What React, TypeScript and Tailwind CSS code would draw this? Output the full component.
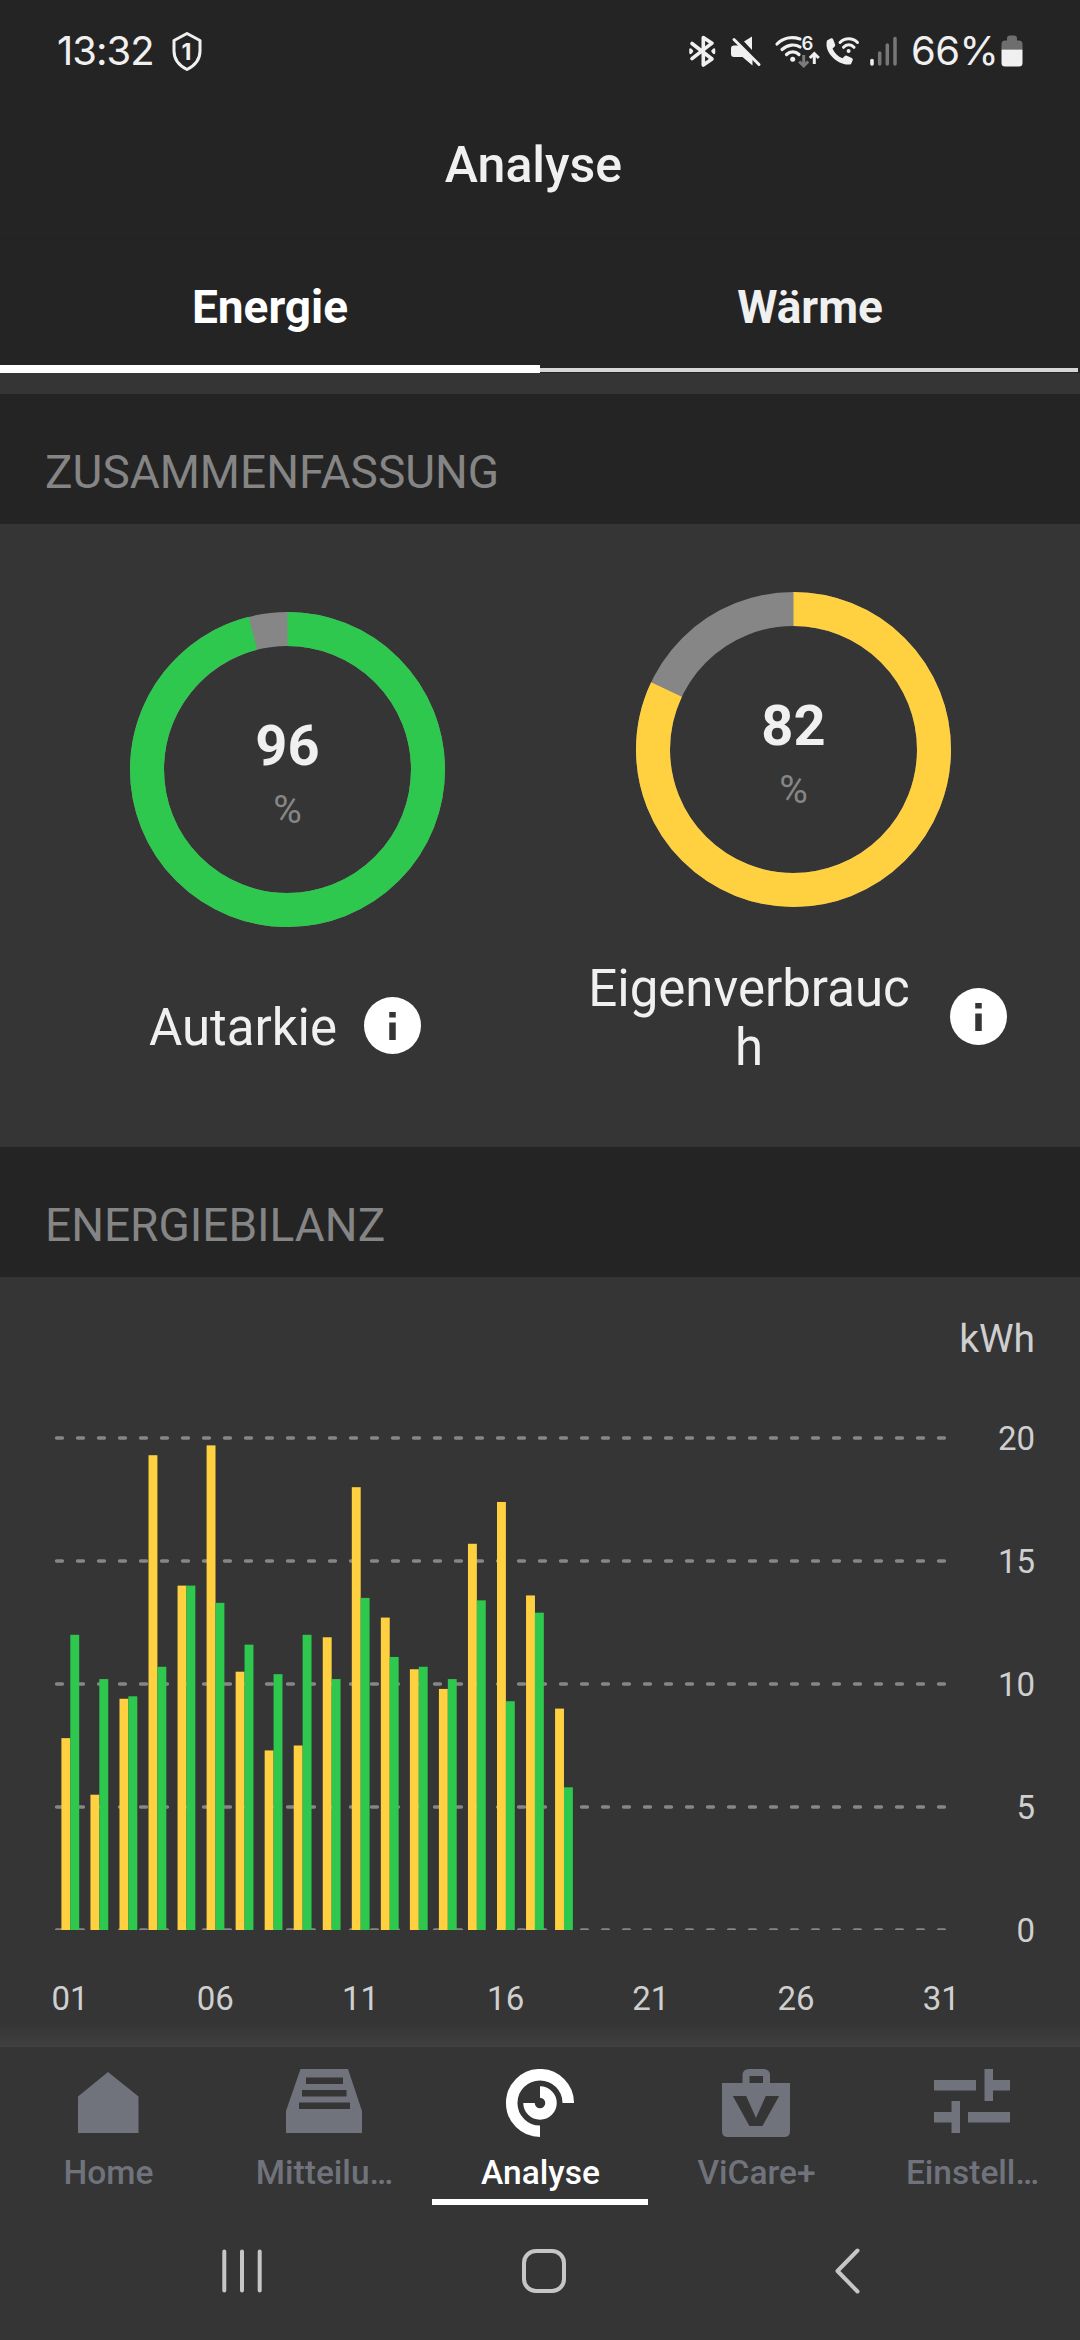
import type { ReactNode } from "react";

const GREEN = "#2ec84e";
const YELLOW = "#ffd140";

// [Erzeugung, Verbrauch] pro Tag in kWh
const DAYS: [number, number][] = [
  [7.8, 12.0],
  [5.5, 10.2],
  [9.4, 9.5],
  [19.3, 10.7],
  [14.0, 14.0],
  [19.7, 13.3],
  [10.5, 11.6],
  [7.3, 10.4],
  [7.5, 12.0],
  [11.9, 10.2],
  [18.0, 13.5],
  [12.7, 11.1],
  [10.6, 10.7],
  [9.8, 10.2],
  [15.7, 13.4],
  [17.4, 9.3],
  [13.6, 12.9],
  [9.0, 5.8],
];

const X_LABELS = ["01", "06", "11", "16", "21", "26", "31"];
const Y_LABELS = [20, 15, 10, 5, 0];

function StatusBar() {
  return (
    <div className="flex h-[102px] items-center justify-between pr-[57px] pl-[57px] font-[Inter,sans-serif] text-[#f0f0f0]">
      <div className="flex items-center">
        <span className="w-[97px] text-[40px] leading-[48px] tracking-[-1px] whitespace-nowrap">13:32</span>
        <svg width="32" height="40" viewBox="0 0 32 40" className="ml-[17px]" fill="none">
          <path d="M16 2.500 L29 9.500 V20 C29 29 24 34.500 16 38.500 C8 34.500 3 29 3 20 V9.500 Z" stroke="#f0f0f0" strokeWidth="3" strokeLinejoin="round" />
          <text x="15.500" y="28.500" textAnchor="middle" fontSize="23" fontWeight="700" fill="#f0f0f0">1</text>
        </svg>
      </div>
      <div className="flex items-center">
        <svg width="220" height="50" viewBox="680 26 220 50" fill="none">
          {/* Bluetooth */}
          <g stroke="#f0f0f0" strokeWidth="3.600" strokeLinecap="round" strokeLinejoin="round">
            <path d="M692 43.500 L712 59 L703.300 65 V37.500 L712 43.200 L692 58.700" />
            <path d="M690.500 49.500l1.500 1.700l-1.500 1.700zM714 49.500l-1.500 1.700l1.500 1.700z" strokeWidth="2.500" />
          </g>
          {/* Ton aus */}
          <path d="M734 45.500 h5 L752.500 59 V65.500 L742.500 57 H734 a3 3 0 0 1-3-3 V48.500 a3 3 0 0 1 3-3Z M752 36.500 V50 L744 41.500 Z" fill="#f0f0f0" />
          <path d="M734 39.500 L759 64.500" stroke="#f0f0f0" strokeWidth="3" strokeLinecap="round" />
          {/* WLAN */}
          <g stroke="#f0f0f0" strokeWidth="3.200" strokeLinecap="round">
            <path d="M777 44 C783.500 37.300 792.500 36.500 800 39" />
            <path d="M782 49.500 C788 44 795.500 44 800 47" />
            <path d="M786.500 54.500 C790 51 795.500 51 799 54.500" />
          </g>
          <circle cx="792.700" cy="59.200" r="2.500" fill="#f0f0f0" />
          <text x="807.300" y="49.700" textAnchor="middle" fontSize="18.500" fontWeight="600" fill="#f0f0f0">6</text>
          <path d="M803.700 55v10M799.200 61.500l4.500 4.500 4.500-4.500" stroke="#7b7b7b" strokeWidth="3" />
          <path d="M814.300 64v-10M809.800 58l4.500-4.500 4.500 4.500" stroke="#f0f0f0" strokeWidth="3" />
          {/* WLAN-Anruf */}
          <path d="M827 40.500 l4-2.200 q1.500-.5 2.100 1 l2 5.200 q.4 1.300-.6 2.200 l-2 1.800 c2 4.800 5.500 8 10 9.700 l2-2 q1-.9 2.300-.4 l5 2.200 q1.500.8.9 2.300 l-1.800 4 C839 66.500 823.500 53 827 40.500Z" fill="#f0f0f0" />
          <path d="M840 42.500 C845 37.500 852.500 37.500 857.500 42.500 M843.500 47.300 C846.500 43.800 851 43.800 854 47.300" stroke="#f0f0f0" strokeWidth="3" strokeLinecap="round" />
          <circle cx="848.600" cy="51" r="2" fill="#f0f0f0" />
          {/* Empfang */}
          <path d="M872 60.500v3.500" stroke="#f0f0f0" strokeWidth="3.600" strokeLinecap="round" />
          <path d="M879.700 53v11M887.300 45v19M895 38.500v25.500" stroke="#777" strokeWidth="3.500" strokeLinecap="round" />
        </svg>
        <span className="ml-[11px] w-[90px] text-[40px] leading-[48px] tracking-[-0.500px] whitespace-nowrap">66%</span>
        <svg width="22" height="32" viewBox="0 0 22 32">
          <path d="M0.500 14 V9 Q0.500 5.500 4 5.500 H6 V3.500 Q6 0.500 9 0.500 H13 Q16 0.500 16 3.500 V5.500 H18 Q21.500 5.500 21.500 9 V14.500 H0.500Z" fill="#6e6e6e" />
          <path d="M0.500 14.500 H21.500 V28 Q21.500 31.500 18 31.500 H4 Q0.500 31.500 0.500 28Z" fill="#f0f0f0" />
        </svg>
      </div>
    </div>
  );
}

function SectionTitle({ children }: { children: ReactNode }) {
  return (
    <h2 className="flex h-[130px] items-center bg-[#242424] pt-[26px] pl-[45px] text-[46px] font-normal text-[#858585]">
      {children}
    </h2>
  );
}

function Ring({ value, color }: { value: number; color: string }) {
  const length = 2 * Math.PI * 140.5;
  return (
    <div className="grid size-[315px] place-items-center">
      <svg width="315" height="315" viewBox="0 0 315 315" className="col-start-1 row-start-1 -rotate-90" fill="none" strokeWidth="34">
        <circle cx="157.500" cy="157.500" r="140.500" stroke="#868686" />
        <circle cx="157.500" cy="157.500" r="140.500" stroke={color} strokeDasharray={`${(value / 100) * length} ${length}`} />
      </svg>
      <div className="col-start-1 row-start-1 flex flex-col items-center pt-[7px] text-[#f0f0f0]">
        <span className="text-[56px] leading-[66px] font-bold">{value}</span>
        <span className="mt-[8px] text-[39px] leading-[46px] text-[#868686]">%</span>
      </div>
    </div>
  );
}

function InfoIcon() {
  return (
    <svg width="57" height="57" viewBox="0 0 57 57" className="shrink-0">
      <circle cx="28.500" cy="28.500" r="28.500" fill="#fff" />
      <path d="M25.250 15h6.500v5.500h-6.500zM25.250 25.500h6.500V43h-6.500z" fill="#353535" />
    </svg>
  );
}

function Chart() {
  return (
    <div className="flex h-[770px] flex-col pt-[39px]">
      <p className="pr-[45px] text-right text-[39px] leading-[46px] text-[#cfcfcf]">kWh</p>
      <div className="mt-[56px] flex h-[512px] justify-between pr-[45px]">
        <svg width="960" height="512" viewBox="0 1418 960 512">
          {Y_LABELS.map((v) => (
            <path
              key={v}
              d={`M56.500 ${1930 - v * 24.6}H946`}
              stroke="#868686"
              strokeWidth="3.300"
              strokeLinecap="round"
              strokeDasharray="6 15"
            />
          ))}
          {DAYS.map(([a, b], i) => (
            <g key={i}>
              <rect x={61.4 + i * 29.04} y={1930 - a * 24.6} width="8.900" height={a * 24.6} fill={YELLOW} />
              <rect x={70.3 + i * 29.04} y={1930 - b * 24.6} width="8.900" height={b * 24.6} fill={GREEN} />
            </g>
          ))}
        </svg>
        <div className="flex flex-col text-right text-[33px] leading-[41px] text-[#cfcfcf]">
          {Y_LABELS.map((v) => (
            <span key={v} className="h-[123px] shrink-0">{v}</span>
          ))}
        </div>
      </div>
      <div className="mt-[49px] flex">
        {X_LABELS.map((d) => (
          <span key={d} className="w-[145.200px] shrink-0 text-center text-[33px] leading-[40px] text-[#cfcfcf] first:ml-[-2.500px]">
            {d}
          </span>
        ))}
      </div>
      <div className="mt-auto h-[23px] bg-linear-to-b from-[#353535] to-[#404040]" />
    </div>
  );
}

const NAV: { label: string; icon: ReactNode }[] = [
  { label: "Home", icon: <path d="M8 27.500 L38 3 L68.500 27.500 V64 H8Z" /> },
  {
    label: "Mitteilu…",
    icon: <path fillRule="evenodd" d="M14.500 0H62L76 42V64H0V42ZM20 8.500v6.500h37V8.500ZM16 21v6.500h44.500V21ZM13 33.500V40h51v-6.500Z" />,
  },
  {
    label: "Analyse",
    icon: (
      <g fill="none" stroke="currentColor" strokeWidth="11.500">
        <path d="M66.300 34 A28.300 28.300 0 1 0 38 62.300" />
        <path d="M27 34 A11 11 0 1 0 38 23" />
      </g>
    ),
  },
  {
    label: "ViCare+",
    icon: (
      <>
        <path fillRule="evenodd" d="M4 14H24.500V6.500Q24.500 0 31 0H45.500Q52 0 52 6.500V14H72V62Q72 68 66 68H10Q4 68 4 62ZM31.500 7V14H45V7Z" />
        <text x="15" y="56.500" fontSize="42" fontWeight="900" textLength="46" lengthAdjust="spacingAndGlyphs" fill="#353535">V</text>
      </>
    ),
  },
  {
    label: "Einstell…",
    icon: <path d="M0 11H42V21.500H0ZM50.500 0H59V11H76V21.500H59V32H50.500ZM17.500 32H26V64H17.500V53.500H0V43H17.500ZM34 43H76V53.500H34Z" />,
  },
];

function BottomNav() {
  return (
    <nav className="flex h-[158px] bg-[#353535]">
      {NAV.map(({ label, icon }) => (
        <div
          key={label}
          className={
            label === "Analyse"
              ? "flex w-[216px] flex-col items-center border-b-[6px] border-white pt-[22px] text-white"
              : "flex w-[216px] flex-col items-center pt-[22px] text-[#70737b]"
          }
        >
          <svg width="76" height="70" viewBox="0 0 76 70" fill="currentColor" className="shrink-0">{icon}</svg>
          <span className="mt-[14px] pl-[1px] text-[33.500px] leading-[40px] font-medium">{label}</span>
        </div>
      ))}
    </nav>
  );
}

function SystemNav() {
  return (
    <svg width="1080" height="135" viewBox="0 2205 1080 135" fill="none" stroke="#c6c6c6" strokeWidth="4" strokeLinecap="round" strokeLinejoin="round">
      <path d="M224.300 2251.500V2290.500M242 2251.500V2290.500M259.700 2251.500V2290.500" />
      <rect x="524" y="2251" width="40" height="40" rx="12" />
      <path d="M857.500 2250.500L837.500 2271L857.500 2291.500" />
    </svg>
  );
}

export default function App() {
  return (
    <div className="flex h-[2340px] w-[1080px] flex-col overflow-hidden bg-[#353535] font-[Roboto,sans-serif]">
      <header className="bg-[#242424]">
        <StatusBar />
        <h1 className="flex h-[136px] items-start justify-center pt-[33px] pr-[13px] text-[50px] leading-[60px] font-medium text-[#f0f0f0]">
          Analyse
        </h1>
        <div className="flex h-[135px] border-t border-[#212121] text-[46px] font-bold">
          <div className="flex w-[540px] items-center justify-center border-b-[8px] border-white pt-[11px] text-white">Energie</div>
          <div className="flex w-[540px] flex-col text-[#f0f0f0]">
            <div className="flex h-[129px] items-center justify-center pt-[8px]">Wärme</div>
            <div className="mr-[2px] h-[4px] bg-[#d6d6d6]" />
          </div>
        </div>
      </header>
      <main className="h-[1674px] pt-[21px]">
        <SectionTitle>ZUSAMMENFASSUNG</SectionTitle>
        <div className="flex h-[623px]">
          <div className="flex w-[575px] flex-col items-center pt-[88px]">
            <Ring value={96} color={GREEN} />
            <div className="mt-[67px] flex items-center gap-[27px] pr-[5px] text-[51px] leading-[59px] text-[#f0f0f0]">
              <span className="pt-[4px]">Autarkie</span>
              <InfoIcon />
            </div>
          </div>
          <div className="flex w-[437px] flex-col items-center pt-[68px]">
            <Ring value={82} color={YELLOW} />
            <div className="mt-[48px] flex w-[437px] items-center justify-end gap-[34px] pr-[5px] text-[51px] leading-[59px] text-[#f0f0f0]">
              <span className="w-[334px] pt-[4px] text-center break-all">Eigenverbrauch</span>
              <InfoIcon />
            </div>
          </div>
        </div>
        <SectionTitle>ENERGIEBILANZ</SectionTitle>
        <Chart />
      </main>
      <BottomNav />
      <SystemNav />
    </div>
  );
}
